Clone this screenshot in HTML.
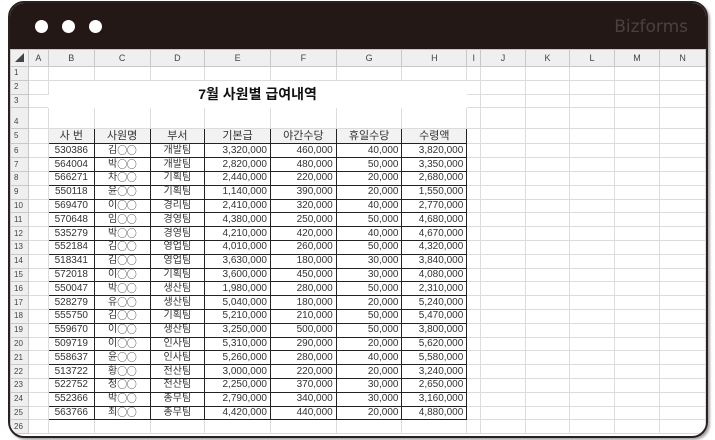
<!DOCTYPE html>
<html><head><meta charset="utf-8"><style>
*{margin:0;padding:0;box-sizing:border-box}
body{width:715px;height:440px;background:#fff;position:relative;overflow:hidden;font-family:"Liberation Sans","Noto Sans CJK KR",sans-serif;}
.frame{position:absolute;left:8px;top:1px;width:700px;height:437px;border:2px solid #2a211e;border-radius:16px;overflow:hidden;background:#fff;box-shadow:2px 2px 2px rgba(0,0,0,.35)}
.hdr{position:absolute;left:0;top:0;width:100%;height:46px;background:#231815}
.dot{position:absolute;top:17px;width:13px;height:13px;border-radius:50%;background:#fff}
.logo{position:absolute;right:18px;top:14px;color:#4a413e;font-size:17px;font-family:"DejaVu Sans","Liberation Sans",sans-serif}
.sheet{position:absolute;left:0;top:46px}
table{border-collapse:collapse;table-layout:fixed}
td{border:1px solid #dcdcdc;font-size:10px;color:#333;padding:0 3px;white-space:nowrap;overflow:hidden;height:13.8px;line-height:12px}
.ch td{background:#efefef;text-align:center;font-size:9px;color:#444;height:17px;border-color:#c8c8c8}
td.rn{background:#efefef;font-size:8px;color:#444;text-align:left;padding-left:3px;border-color:#c8c8c8}
.t td.d{border:1px solid #222}
.c{text-align:center}.r{text-align:right}
.th{background:#f2f2f2;text-align:center;font-size:11px}
.title{font-size:14px;font-weight:bold;text-align:center;color:#111;border-color:#fff}
.o{display:inline-block;height:10px;line-height:10px;vertical-align:-1px;font-family:"Noto Sans CJK KR",sans-serif;font-size:10px;letter-spacing:-0.5px}
</style></head><body>
<div class="frame">
<div class="hdr"><div class="dot" style="left:25px"></div><div class="dot" style="left:52px"></div><div class="dot" style="left:79px"></div><div class="logo">Bizforms</div></div>
<div class="sheet">
<table>
<colgroup><col style="width:18px"><col style="width:20px"><col style="width:46px"><col style="width:56px"><col style="width:55px"><col style="width:66px"><col style="width:66px"><col style="width:66px"><col style="width:65px"><col style="width:14px"><col style="width:45px"><col style="width:45px"><col style="width:45px"><col style="width:46px"><col style="width:46px"></colgroup>
<tr class="ch"><td>◢</td><td>A</td><td>B</td><td>C</td><td>D</td><td>E</td><td>F</td><td>G</td><td>H</td><td>I</td><td>J</td><td>K</td><td>L</td><td>M</td><td>N</td></tr>
<tr><td class="rn">1</td><td></td><td></td><td></td><td></td><td></td><td></td><td></td><td></td><td></td><td></td><td></td><td></td><td></td><td></td></tr>
<tr><td class="rn">2</td><td></td><td colspan="7" rowspan="2" class="title">7월 사원별 급여내역</td><td></td><td></td><td></td><td></td><td></td><td></td></tr>
<tr><td class="rn">3</td><td></td><td></td><td></td><td></td><td></td><td></td><td></td></tr>
<tr style="height:21px"><td class="rn" style="vertical-align:bottom">4</td><td></td><td></td><td></td><td></td><td></td><td></td><td></td><td></td><td></td><td></td><td></td><td></td><td></td><td></td></tr>
<tbody class="t">
<tr style="height:15px"><td class="rn">5</td><td></td><td class="d th">사 번</td><td class="d th">사원명</td><td class="d th">부서</td><td class="d th">기본급</td><td class="d th">야간수당</td><td class="d th">휴일수당</td><td class="d th">수령액</td><td></td><td></td><td></td><td></td><td></td><td></td></tr>
</tbody>
<tbody class="t" id="b"></tbody>
<tr><td class="rn">26</td><td></td><td></td><td></td><td></td><td></td><td></td><td></td><td></td><td></td><td></td><td></td><td></td><td></td><td></td></tr>
</table>
</div></div>
<script>
var d=[["530386","김","개발팀","3,320,000","460,000","40,000","3,820,000"],["564004","박","개발팀","2,820,000","480,000","50,000","3,350,000"],["566271","차","기획팀","2,440,000","220,000","20,000","2,680,000"],["550118","윤","기획팀","1,140,000","390,000","20,000","1,550,000"],["569470","이","경리팀","2,410,000","320,000","40,000","2,770,000"],["570648","임","경영팀","4,380,000","250,000","50,000","4,680,000"],["535279","박","경영팀","4,210,000","420,000","40,000","4,670,000"],["552184","김","영업팀","4,010,000","260,000","50,000","4,320,000"],["518341","김","영업팀","3,630,000","180,000","30,000","3,840,000"],["572018","이","기획팀","3,600,000","450,000","30,000","4,080,000"],["550047","박","생산팀","1,980,000","280,000","50,000","2,310,000"],["528279","유","생산팀","5,040,000","180,000","20,000","5,240,000"],["555750","김","기획팀","5,210,000","210,000","50,000","5,470,000"],["559670","이","생산팀","3,250,000","500,000","50,000","3,800,000"],["509719","이","인사팀","5,310,000","290,000","20,000","5,620,000"],["558637","윤","인사팀","5,260,000","280,000","40,000","5,580,000"],["513722","황","전산팀","3,000,000","220,000","20,000","3,240,000"],["522752","정","전산팀","2,250,000","370,000","30,000","2,650,000"],["552366","박","총무팀","2,790,000","340,000","30,000","3,160,000"],["563766","최","총무팀","4,420,000","440,000","20,000","4,880,000"]];
var h="";d.forEach(function(r,i){h+='<tr><td class="rn">'+(i+6)+'</td><td></td><td class="d c">'+r[0]+'</td><td class="d c">'+r[1]+'<span class="o">○○</span></td><td class="d c">'+r[2]+'</td><td class="d r">'+r[3]+'</td><td class="d r">'+r[4]+'</td><td class="d r">'+r[5]+'</td><td class="d r">'+r[6]+'</td><td></td><td></td><td></td><td></td><td></td><td></td></tr>';});
document.getElementById("b").innerHTML=h;
</script>
</body></html>
